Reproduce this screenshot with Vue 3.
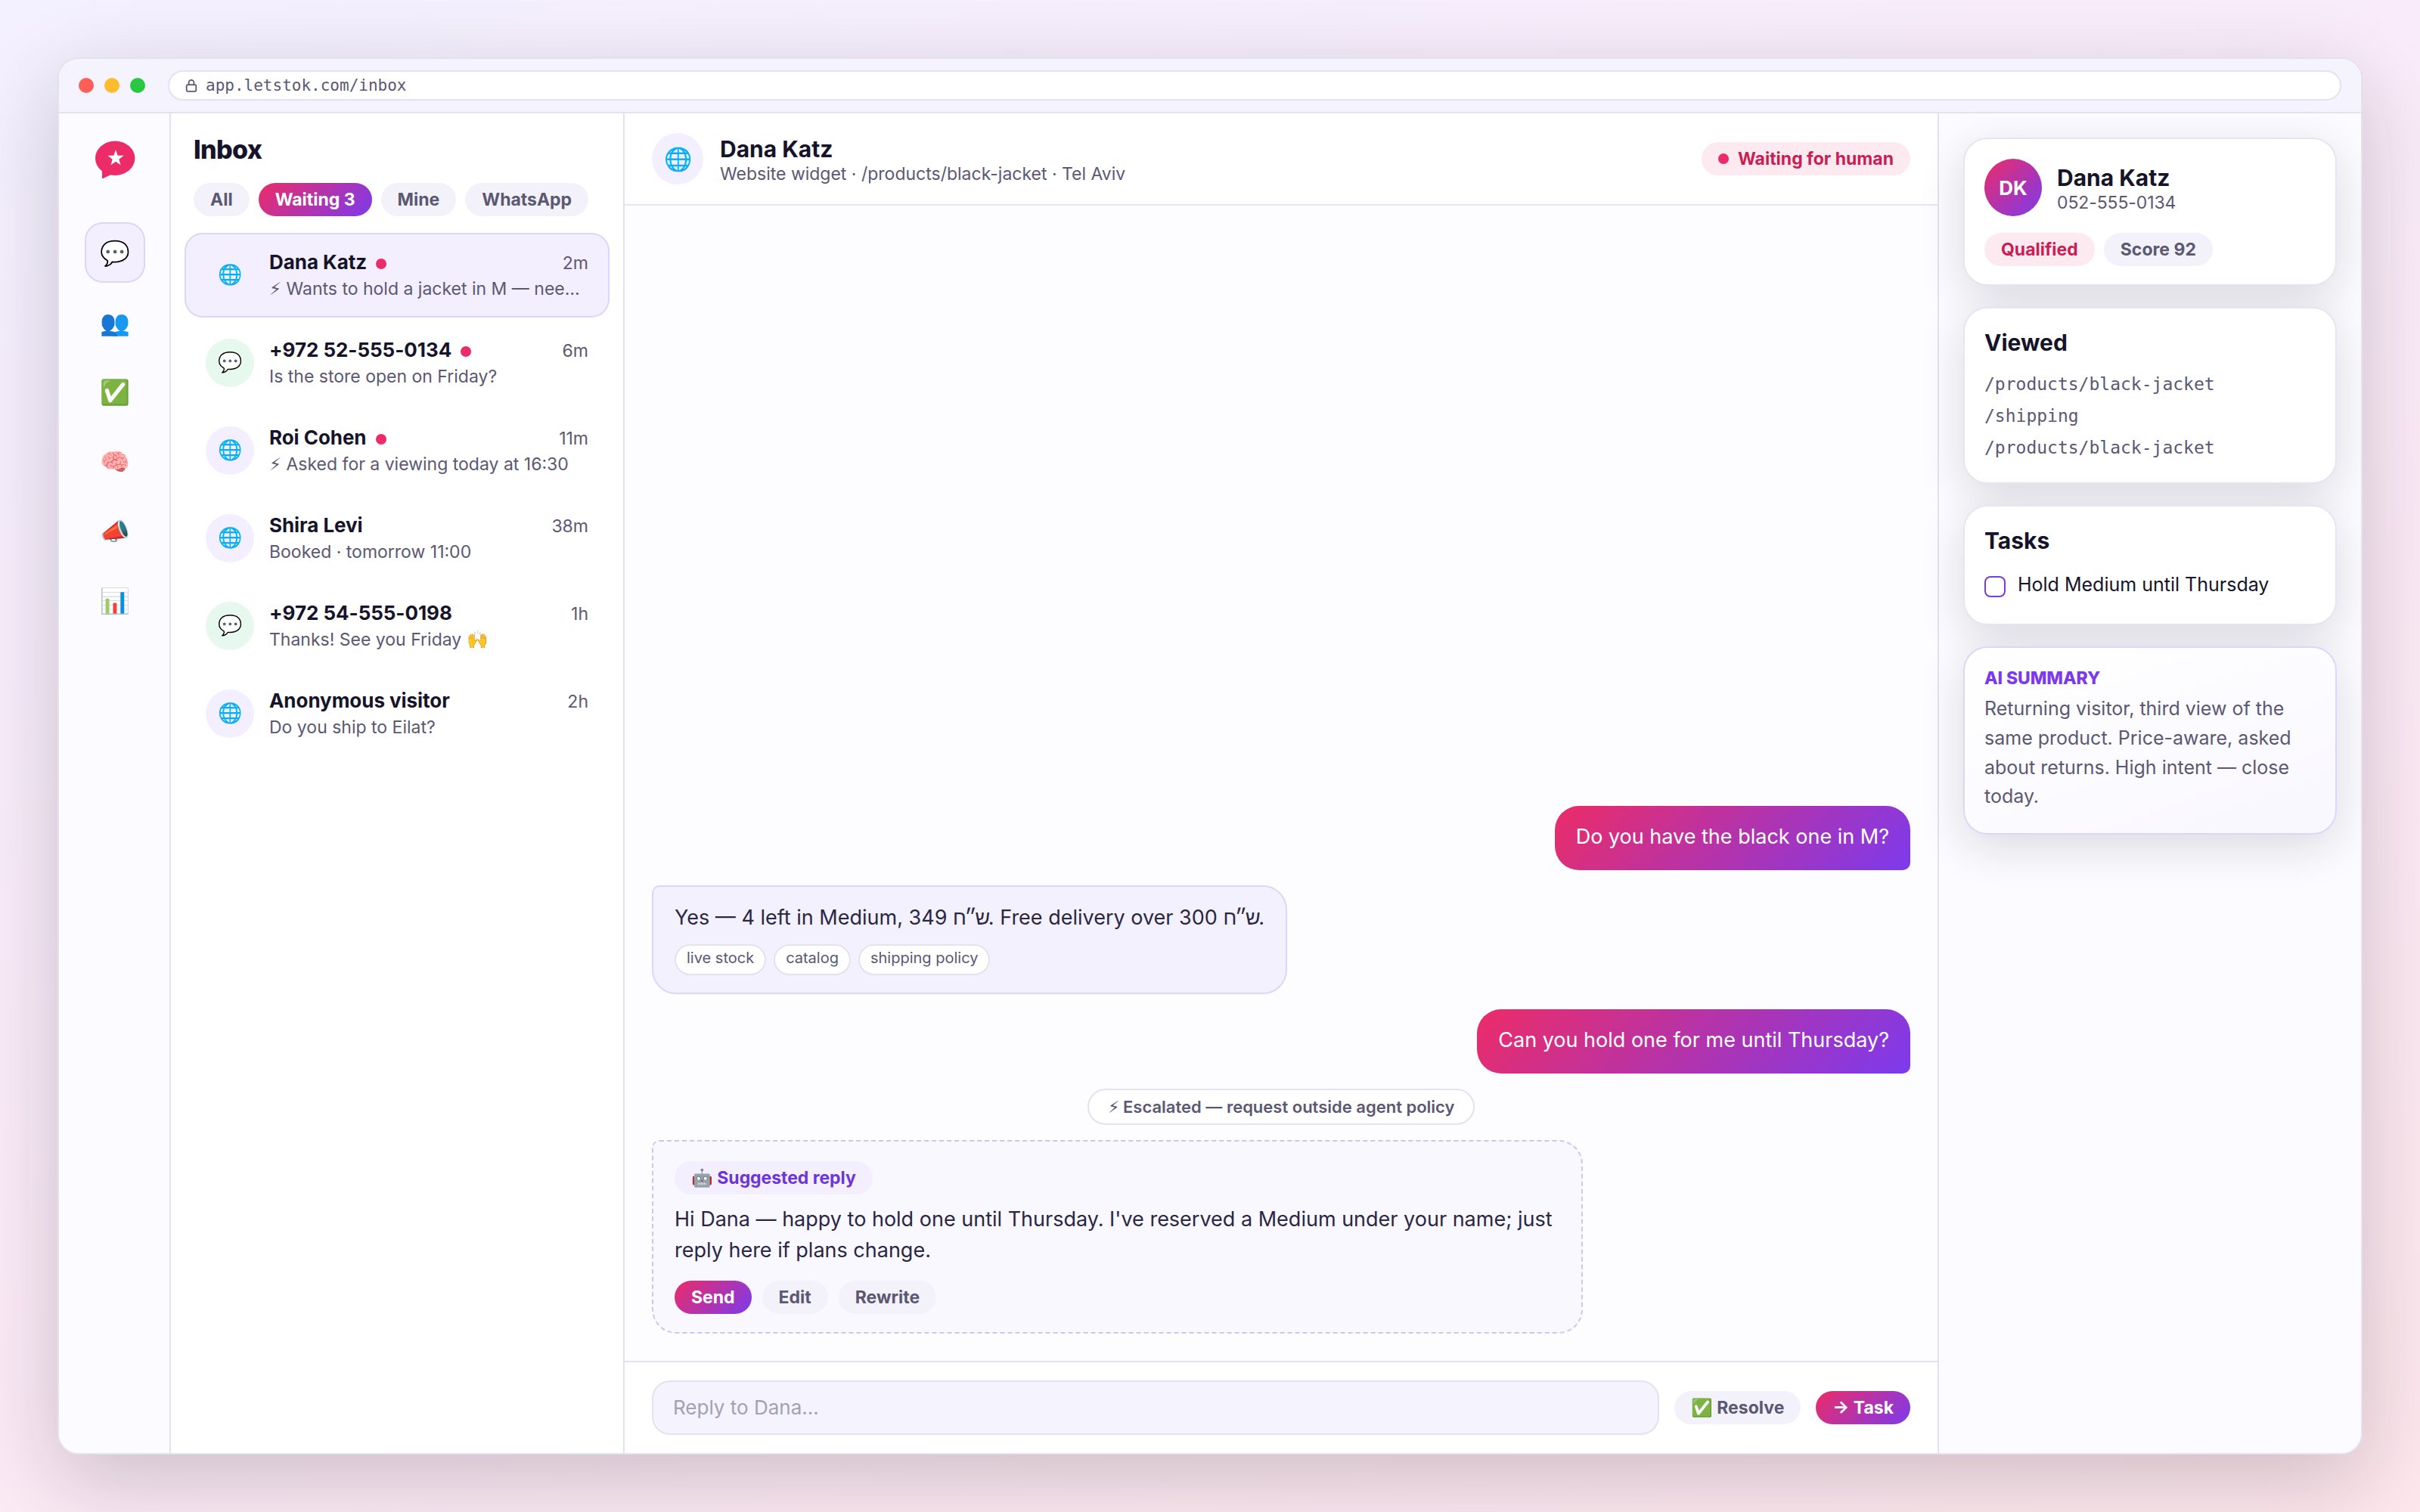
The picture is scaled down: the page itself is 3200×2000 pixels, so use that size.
<script setup>
const nav = ['💬', '👥', '✅', '🧠', '📣', '📊']
const filters = ['All', 'Waiting 3', 'Mine', 'WhatsApp']
const conversations = [
  { icon: '🌐', kind: 'web', name: 'Dana Katz', time: '2m', text: '⚡︎ Wants to hold a jacket in M — nee…', dot: true },
  { icon: '💬', kind: 'wa', name: '+972 52-555-0134', time: '6m', text: 'Is the store open on Friday?', dot: true },
  { icon: '🌐', kind: 'web', name: 'Roi Cohen', time: '11m', text: '⚡︎ Asked for a viewing today at 16:30', dot: true },
  { icon: '🌐', kind: 'web', name: 'Shira Levi', time: '38m', text: 'Booked · tomorrow 11:00' },
  { icon: '💬', kind: 'wa', name: '+972 54-555-0198', time: '1h', text: 'Thanks! See you Friday 🙌' },
  { icon: '🌐', kind: 'web', name: 'Anonymous visitor', time: '2h', text: 'Do you ship to Eilat?' },
]
const sources = ['live stock', 'catalog', 'shipping policy']
const viewed = ['/products/black-jacket', '/shipping', '/products/black-jacket']
</script>

<template>
  <div class="stage">
    <div class="window">
      <div class="titlebar">
        <span class="light red"></span>
        <span class="light yellow"></span>
        <span class="light green"></span>
        <div class="url">
          <svg class="lock" viewBox="0 0 18 18" fill="none" stroke="currentColor" stroke-width="1.8">
            <rect x="2.700" y="8.200" width="12.600" height="8.600" rx="1.800" />
            <path d="M5.600 8.200V5.300a3.400 3.400 0 0 1 6.800 0v2.900" />
          </svg>
          <span>app.letstok.com/inbox</span>
        </div>
      </div>

      <div class="body">
        <nav class="rail">
          <svg class="logo" viewBox="0 0 60 60">
            <ellipse cx="30.200" cy="29.300" rx="26.200" ry="22.700" fill="#ec2c68" />
            <path fill="#ec2c68" d="M13 42v13.500q.2 1.200 1.300.6L27 50z" />
            <path fill="#fff" d="M31 18.100L33.650 25.660 41.650 25.840 35.280 30.690 37.580 38.360 31 33.800 24.420 38.360 26.720 30.690 20.350 25.840 28.350 25.660z" />
          </svg>
          <div v-for="(n, i) in nav" :key="n" class="navbtn" :class="{ on: i === 0 }">{{ n }}</div>
        </nav>

        <section class="list">
          <h1>Inbox</h1>
          <div class="filters">
            <span v-for="(f, i) in filters" :key="f" class="pill" :class="{ grad: i === 1 }">{{ f }}</span>
          </div>
          <div class="rows">
            <div v-for="(c, i) in conversations" :key="c.name" class="row" :class="{ on: i === 0 }">
              <div class="ava" :class="c.kind">{{ c.icon }}</div>
              <div class="rowmain">
                <div class="rowtop">
                  <span class="name">{{ c.name }}</span>
                  <span v-if="c.dot" class="dot"></span>
                  <span class="time">{{ c.time }}</span>
                </div>
                <div class="snippet">{{ c.text }}</div>
              </div>
            </div>
          </div>
        </section>

        <main class="chat">
          <header class="chathead">
            <div class="ava big web">🌐</div>
            <div class="who">
              <div class="title">Dana Katz</div>
              <div class="sub">Website widget · /products/black-jacket · Tel Aviv</div>
            </div>
            <span class="pill hot"><i class="dot small"></i>Waiting for human</span>
          </header>

          <div class="messages">
            <div class="bubble user">Do you have the black one in M?</div>
            <div class="bubble agent">
              <div>Yes — 4 left in Medium, 349 <span class="he">ש״ח</span>. Free delivery over 300 <span class="he">ש״ח</span>.</div>
              <div class="sources"><span v-for="s in sources" :key="s">{{ s }}</span></div>
            </div>
            <div class="bubble user">Can you hold one for me until Thursday?</div>
            <div class="event"><span class="bolt">⚡︎</span> Escalated — request outside agent policy</div>
            <div class="bubble draft">
              <span class="pill violet">🤖 Suggested reply</span>
              <p>Hi Dana — happy to hold one until Thursday. I've reserved a Medium under your name; just reply here if plans change.</p>
              <div class="actions">
                <span class="pill grad">Send</span>
                <span class="pill">Edit</span>
                <span class="pill">Rewrite</span>
              </div>
            </div>
          </div>

          <footer class="composer">
            <div class="input">Reply to Dana…</div>
            <span class="pill">✅ Resolve</span>
            <span class="pill grad">→ Task</span>
          </footer>
        </main>

        <aside class="side">
          <div class="card">
            <div class="person">
              <div class="initials">DK</div>
              <div class="who">
                <div class="title">Dana Katz</div>
                <div class="sub phone">052-555-0134</div>
              </div>
            </div>
            <div class="tags">
              <span class="pill hot">Qualified</span>
              <span class="pill">Score 92</span>
            </div>
          </div>
          <div class="card">
            <div class="title">Viewed</div>
            <div class="paths"><div v-for="(v, i) in viewed" :key="i">{{ v }}</div></div>
          </div>
          <div class="card tasks">
            <div class="title">Tasks</div>
            <div class="task"><span class="check"></span>Hold Medium until Thursday</div>
          </div>
          <div class="card ai">
            <div class="ailabel">AI SUMMARY</div>
            <div class="aitext">Returning visitor, third view of the same product. Price-aware, asked about returns. High intent — close today.</div>
          </div>
        </aside>
      </div>
    </div>
  </div>
</template>

<style>
body { margin: 0; }
</style>

<style scoped>
* { box-sizing: border-box; }
.stage {
  width: 3200px;
  height: 2000px;
  padding: 76px;
  overflow: hidden;
  background: linear-gradient(160deg, #f3f0ff 0%, #faebf9 42%, #fde6ec 100%);
  font-family: Inter, "Liberation Sans", sans-serif;
  color: #16142a;
}
.window {
  display: flex;
  flex-direction: column;
  height: 1848px;
  border: 2px solid #e4e2ec;
  border-radius: 28px;
  overflow: hidden;
  background: #fff;
  box-shadow: 0 32px 110px rgba(22, 18, 30, 0.2);
}
.titlebar {
  display: flex;
  align-items: center;
  gap: 14px;
  height: 72px;
  flex: none;
  padding: 0 26px;
  background: #f5f3fd;
  border-bottom: 2px solid #e4e2ec;
}
.light { width: 20px; height: 20px; border-radius: 50%; }
.red { background: #ff5f57; }
.yellow { background: #febc2e; }
.green { background: #28c840; }
.url {
  flex: 1;
  display: flex;
  align-items: center;
  gap: 10px;
  height: 40px;
  margin-left: 16px;
  padding: 0 20px;
  border: 2px solid #e4e2ec;
  border-radius: 20px;
  background: #fff;
  color: #5b5873;
  font: 21px "DejaVu Sans Mono", monospace;
}
.lock { width: 18px; height: 18px; }
.body { flex: 1; display: flex; min-height: 0; }

.rail {
  width: 148px;
  flex: none;
  display: flex;
  flex-direction: column;
  align-items: center;
  gap: 12px;
  padding: 30px 0 0 1px;
  background: #fcfbff;
  border-right: 2px solid #e4e2ec;
}
.logo { width: 60px; height: 60px; margin-bottom: 42px; }
.navbtn {
  display: flex;
  align-items: center;
  justify-content: center;
  width: 80px;
  height: 80px;
  border: 2px solid transparent;
  border-radius: 24px;
  font-size: 32px;
}
.navbtn.on { background: #f3effe; border-color: #ddd6f8; }

.list {
  width: 600px;
  flex: none;
  padding: 28px 18px 0;
  background: #fff;
  border-right: 2px solid #e4e2ec;
}
h1 {
  margin: 0 0 24px;
  padding-left: 12px;
  font-size: 34px;
  line-height: 40px;
  font-weight: 800;
  letter-spacing: -0.02em;
}
.filters { display: flex; gap: 12px; padding-left: 12px; margin-bottom: 22px; }
.pill {
  display: inline-flex;
  align-items: center;
  gap: 12px;
  height: 44px;
  padding: 0 22px;
  border-radius: 22px;
  background: #f3f2fa;
  color: #5b5873;
  font-size: 23px;
  font-weight: 700;
  white-space: nowrap;
}
.grad { background: linear-gradient(135deg, #ec2c68, #7c3aed); color: #fff; }
.hot { background: #fdeaf0; color: #c81e55; }
.violet { background: #f3effe; color: #6d35d6; letter-spacing: -0.05px; }
.rows { display: flex; flex-direction: column; gap: 4px; }
.row {
  display: flex;
  align-items: center;
  gap: 20px;
  height: 112px;
  padding: 0 26px;
  border: 2px solid transparent;
  border-radius: 24px;
}
.row.on { background: #f3effe; border-color: #ddd6f8; }
.ava {
  display: flex;
  align-items: center;
  justify-content: center;
  width: 64px;
  height: 64px;
  flex: none;
  padding-bottom: 3px;
  border-radius: 50%;
  font-size: 26px;
}
.ava.big { width: 68px; height: 68px; padding-bottom: 0; font-size: 30px; }
.web { background: #f3effe; }
.wa { background: #e7f8ee; }
.rowmain { flex: 1; min-width: 0; }
.rowtop { display: flex; align-items: center; gap: 12px; line-height: 36px; }
.name { font-size: 26px; font-weight: 700; letter-spacing: -0.05px; }
.dot { width: 14px; height: 14px; border-radius: 50%; background: #ec2c68; }
.rowtop .dot { margin-top: 3px; }
.dot.small { display: block; }
.time { margin-left: auto; padding-top: 2px; font-size: 23px; line-height: 34px; color: #5b5873; }
.snippet {
  font-size: 23px;
  line-height: 34px;
  color: #5b5873;
  white-space: nowrap;
}

.chat { flex: 1; min-width: 0; display: flex; flex-direction: column; background: #fdfcff; }
.chathead {
  display: flex;
  align-items: center;
  gap: 22px;
  height: 122px;
  padding: 0 36px;
  background: #fff;
  border-bottom: 2px solid #e7e6ec;
}
.who { flex: 1; padding-top: 6px; }
.title { font-size: 30px; line-height: 34px; font-weight: 700; }
.sub { font-size: 23px; line-height: 32px; color: #5b5873; }
.phone { letter-spacing: -0.1px; }
.messages {
  flex: 1;
  display: flex;
  flex-direction: column;
  justify-content: flex-end;
  align-items: flex-start;
  gap: 20px;
  padding: 0 36px 36px;
}
.bubble {
  max-width: 74%;
  border-radius: 32px;
  font-size: 27px;
  line-height: 40.5px;
}
.user {
  align-self: flex-end;
  padding: 21px 28px 23.5px;
  background: linear-gradient(135deg, #ec2c68, #7c3aed);
  color: #fff;
  border-bottom-right-radius: 10px;
}
.agent {
  padding: 21px 28px 23px;
  background: #f3f1fd;
  border: 2px solid #ddd6f8;
  border-top-left-radius: 10px;
  color: #2a2745;
}
.he { font-family: "Liberation Sans", sans-serif; line-height: 1; letter-spacing: -2.3px; }
.sources { display: flex; gap: 10px; margin-top: 15px; }
.sources span {
  height: 41px;
  padding: 0 14px;
  border: 2px solid #e4e2ec;
  border-radius: 21px;
  background: #fff;
  color: #5b5873;
  font-size: 20px;
  line-height: 33px;
}
.event {
  align-self: center;
  height: 48px;
  padding: 0 25px;
  border: 2px solid #e4e2ec;
  border-radius: 24px;
  background: #fff;
  color: #5b5873;
  font-size: 22px;
  line-height: 44px;
  font-weight: 600;
}
.bolt { font-weight: 400; }
.draft {
  padding: 26px 28px 24px;
  background: #f9f7ff;
  border: 2px dashed #cfc6ee;
  border-top-left-radius: 10px;
  color: #2a2745;
}
.draft .pill { line-height: 44px; vertical-align: top; }
.draft p { margin: 13px 0 20px; }
.actions { display: flex; gap: 14px; }
.composer {
  display: flex;
  align-items: center;
  gap: 20px;
  height: 122px;
  flex: none;
  padding: 0 36px;
  background: #fff;
  border-top: 2px solid #e4e2ec;
}
.input {
  flex: 1;
  height: 72px;
  padding: 0 26px;
  border: 2px solid #e4e2ec;
  border-radius: 24px;
  background: #f5f3fd;
  color: #a3a1b3;
  font-size: 26px;
  line-height: 68px;
}

.side {
  width: 560px;
  flex: none;
  display: flex;
  flex-direction: column;
  gap: 28px;
  padding: 32px;
  background: #fcfbff;
  border-left: 2px solid #e4e2ec;
}
.card {
  padding: 26px 26px 24px;
  border: 2px solid #e7e6f0;
  border-radius: 32px;
  background: #fff;
  box-shadow: 0 16px 60px rgba(22, 20, 42, 0.14);
}
.card > .title { padding-top: 2px; }
.person { display: flex; align-items: center; gap: 20px; height: 76px; }
.initials {
  display: flex;
  align-items: center;
  justify-content: center;
  width: 76px;
  height: 76px;
  border-radius: 50%;
  background: linear-gradient(135deg, #ec2c68, #7c3aed);
  color: #fff;
  font-size: 26px;
  font-weight: 700;
}
.tags { display: flex; gap: 12px; margin-top: 22px; }
.paths { margin: 17px 0 1px; font: 23px/42px "DejaVu Sans Mono", monospace; color: #5b5873; }
.tasks { padding-bottom: 31px; }
.task { display: flex; align-items: center; gap: 16px; margin-top: 20px; font-size: 25px; line-height: 42px; }
.check { width: 28px; height: 28px; margin-top: 6px; border: 2.500px solid #7440d0; border-radius: 8px; }
.ai { padding-bottom: 29px; border-color: #ddd6f8; background: linear-gradient(160deg, #fff, #f9f7ff); }
.ailabel { font-size: 23px; line-height: 28px; font-weight: 800; letter-spacing: -0.1px; color: #7c3aed; }
.aitext { margin-top: 7px; font-size: 25px; line-height: 38.75px; color: #5b5873; }
</style>
